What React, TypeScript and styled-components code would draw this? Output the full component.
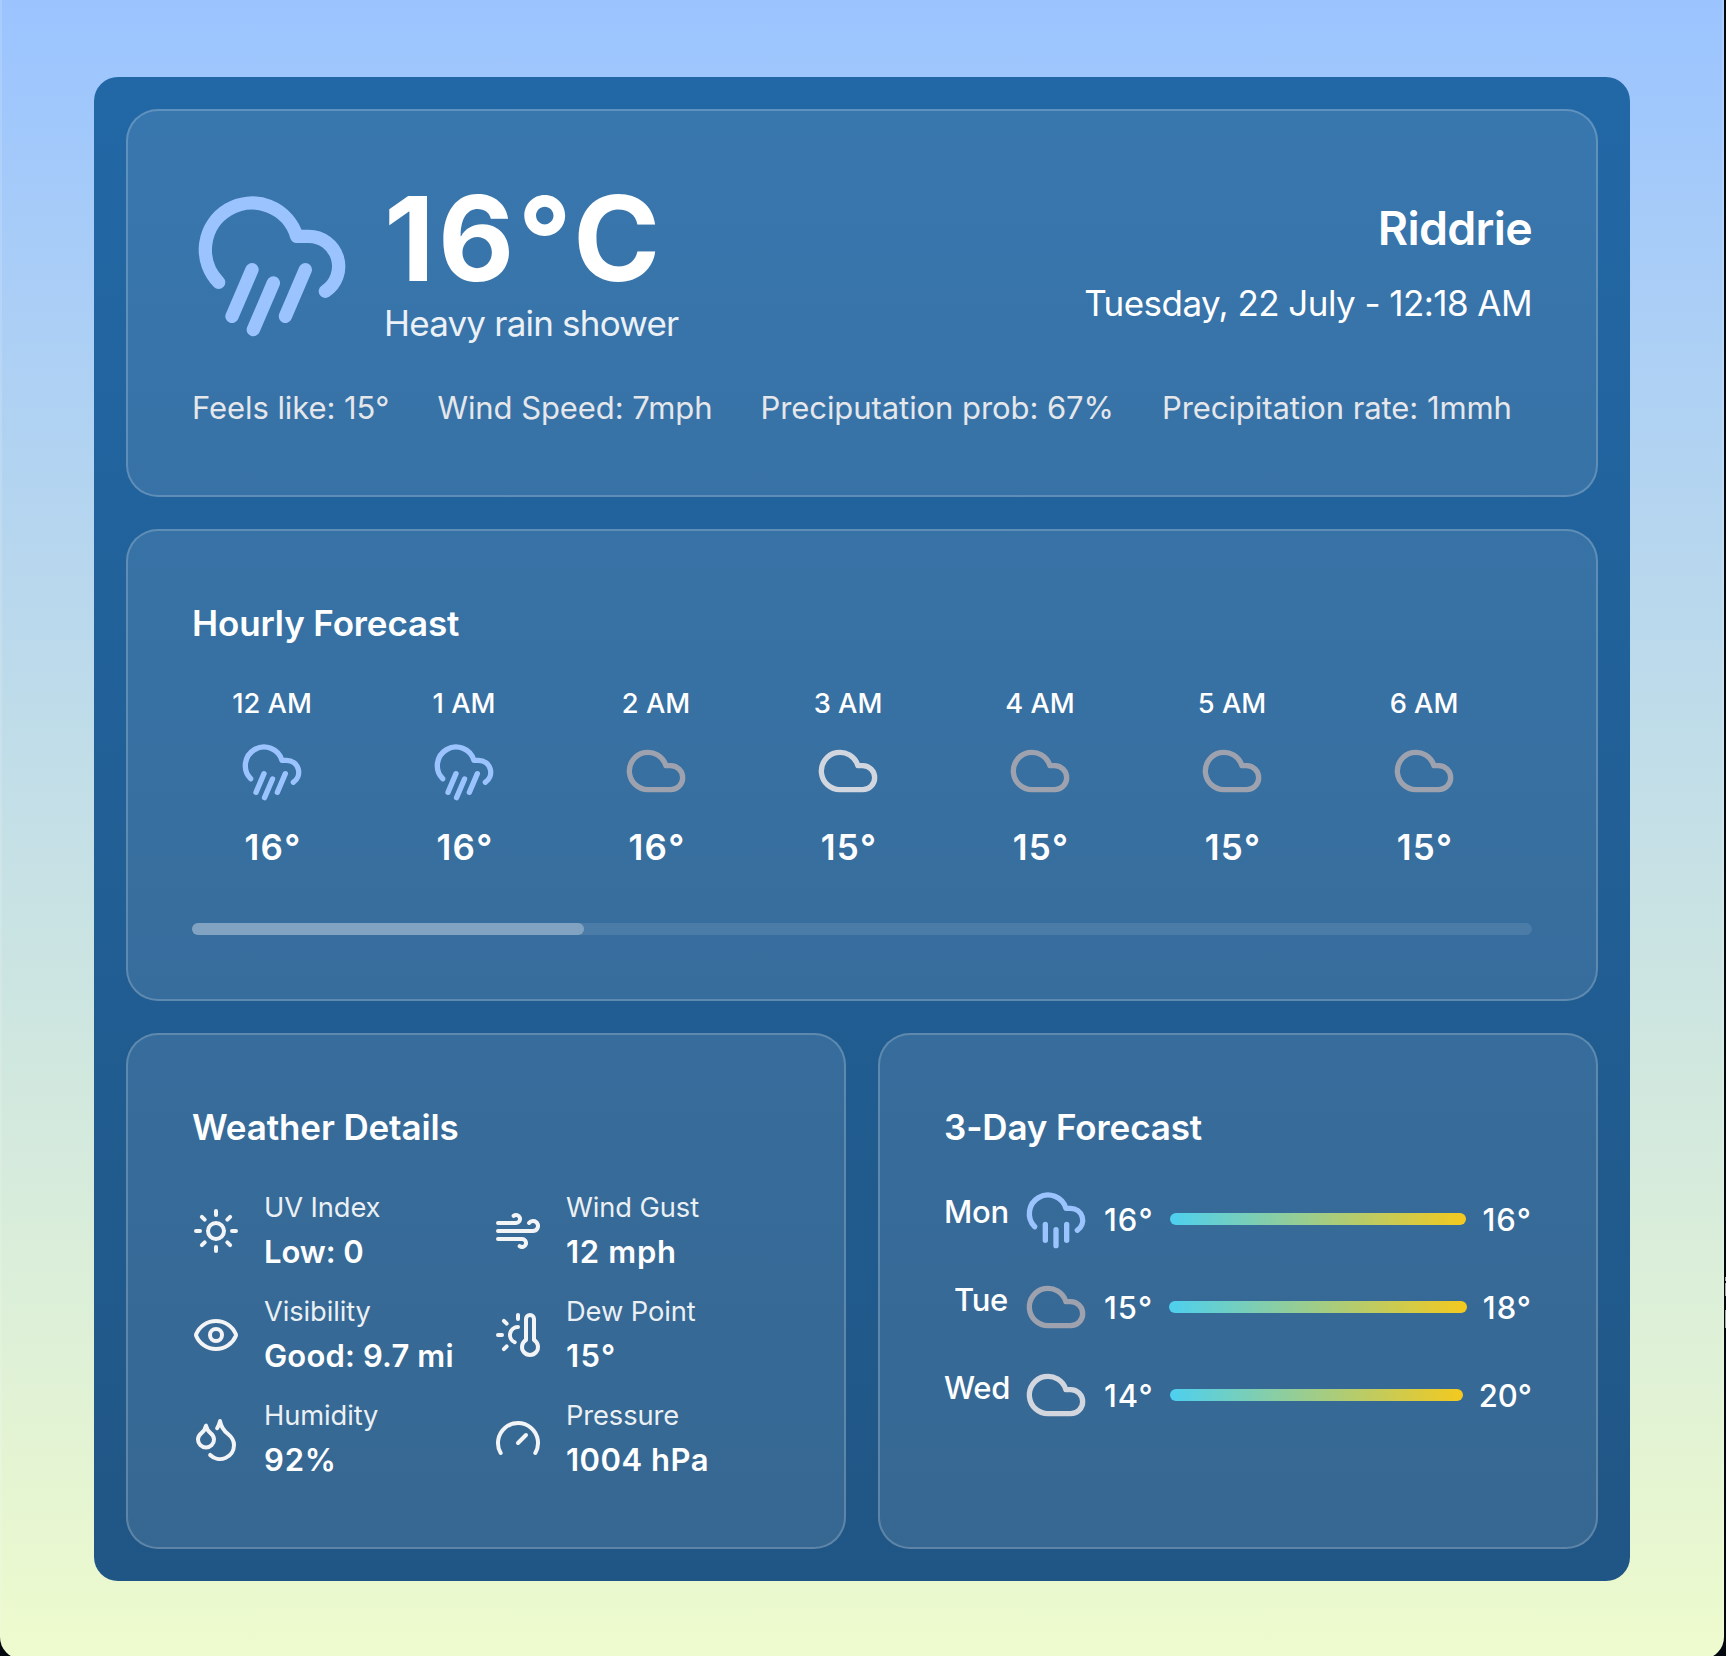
import React from "react";
import styled, { createGlobalStyle } from "styled-components";
import {
  Cloud,
  CloudRain,
  CloudRainWind,
  Droplets,
  Eye,
  Gauge,
  Sun,
  ThermometerSun,
  Wind,
} from "lucide-react";

const GlobalStyle = createGlobalStyle`
  *, *::before, *::after { box-sizing: border-box; }
  body {
    margin: 0;
    height: 1656px;
    overflow: hidden;
    background:
      linear-gradient(
        to bottom,
        transparent 1277px,
        #a5a5a5 1277px, #a5a5a5 1281px,
        transparent 1281px, transparent 1283px,
        #a5a5a5 1283px, #a5a5a5 1296px,
        transparent 1296px, transparent 1310px,
        #a5a5a5 1310px, #a5a5a5 1328px,
        transparent 1328px
      ) right top / 1px 1656px no-repeat,
      #04080f;
    font-family: Inter, "Liberation Sans", sans-serif;
    color: #fff;
    -webkit-font-smoothing: antialiased;
  }
`;

const palette = {
  rain: "#9bc4ff",
  overcast: "#9da2ae",
  cloudy: "#d2d6de",
};

const Page = styled.main`
  width: 1724px;
  height: 1659px;
  padding: 77px 94px 78px;
  border-radius: 0 0 22px 22px;
  background: linear-gradient(to bottom, #9bc4ff 0%, #eefbcd 100%);
  box-shadow: inset 2px 0 0 rgba(255, 255, 255, 0.14), inset -2px 0 0 rgba(255, 255, 255, 0.14);
`;

const Panel = styled.div`
  width: 1536px;
  padding: 32px;
  display: grid;
  grid-template-columns: 1fr 1fr;
  gap: 32px;
  border-radius: 24px;
  background: linear-gradient(to bottom, #2268a6, #205685);
`;

const Card = styled.section<{ $wide?: boolean }>`
  min-width: 0;
  grid-column: ${(p) => (p.$wide ? "1 / -1" : "auto")};
  padding: 64px;
  border: 2px solid rgba(255, 255, 255, 0.2);
  border-radius: 32px;
  background: rgba(255, 255, 255, 0.1);
`;

const Row = styled.div`
  display: flex;
  align-items: center;
  justify-content: space-between;
`;

const Now = styled.div`
  display: flex;
  align-items: center;
  gap: 32px;
`;

const Temperature = styled.div`
  height: 120px;
  padding-top: 3px;
  font-size: 117.5px;
  line-height: 120px;
  font-weight: 700;
  letter-spacing: 3.4px;
`;

const Condition = styled.div`
  font-size: 35px;
  line-height: 56px;
  letter-spacing: -0.8px;
  opacity: 0.9;
`;

const Place = styled.div`
  display: flex;
  flex-direction: column;
  gap: 16px;
  text-align: right;
`;

const City = styled.h1`
  margin: 0;
  height: 64px;
  padding-top: 1px;
  font-size: 46.5px;
  line-height: 64px;
  font-weight: 600;
  letter-spacing: -0.7px;
`;

const DateLine = styled.div`
  font-size: 35px;
  line-height: 56px;
  letter-spacing: -0.55px;
`;

const Stats = styled.div`
  display: flex;
  gap: 48px;
  height: 48px;
  margin-top: 32px;
  padding-top: 1px;
  font-size: 31px;
  line-height: 48px;
  letter-spacing: -0.07px;
  color: #e5e7eb;
  white-space: nowrap;
`;

const Title = styled.h2`
  margin: 0 0 32px;
  font-size: 35px;
  line-height: 56px;
  font-weight: 600;
  letter-spacing: -0.12px;
`;

const Hours = styled.div`
  display: flex;
  gap: 32px;
  padding-bottom: 48px;
  overflow: hidden;
`;

const Hour = styled.div`
  flex: 0 0 160px;
  display: flex;
  flex-direction: column;
  align-items: center;
  gap: 16px;
`;

const HourLabel = styled.div`
  height: 40px;
  padding-top: 1px;
  font-size: 27.3px;
  line-height: 40px;
  font-weight: 500;
`;

const HourTemp = styled.div`
  padding-left: 2px;
  font-size: 35px;
  line-height: 56px;
  font-weight: 600;
  letter-spacing: 1.2px;
`;

const ScrollTrack = styled.div`
  height: 12px;
  border-radius: 6px;
  background: rgba(255, 255, 255, 0.1);
`;

const ScrollThumb = styled.div`
  width: 392px;
  height: 12px;
  border-radius: 6px;
  background: rgba(255, 255, 255, 0.3);
`;

const Details = styled.div`
  display: grid;
  grid-template-columns: 1fr 1fr;
  gap: 16px;
`;

const Detail = styled.div`
  display: flex;
  align-items: center;
  gap: 24px;
  white-space: nowrap;

  svg { flex: none; color: #f3f4f6; }
`;

const DetailLabel = styled.div`
  height: 40px;
  padding-top: 1px;
  font-size: 27.3px;
  line-height: 40px;
  letter-spacing: -0.1px;
  opacity: 0.9;
`;

const DetailValue = styled.div<{ $tracking: number }>`
  height: 48px;
  padding-top: 1px;
  font-size: 31px;
  line-height: 48px;
  font-weight: 600;
  letter-spacing: ${(p) => p.$tracking}px;
`;

const Days = styled.div`
  display: flex;
  flex-direction: column;
  gap: 24px;
`;

const Day = styled.div`
  display: flex;
  align-items: center;
  gap: 16px;
  height: 64px;
  font-size: 31px;
  line-height: 48px;
  font-weight: 500;

  svg { flex: none; }
`;

const DayName = styled.div`
  width: 64px;
  min-width: 0;
  flex: none;
  align-self: flex-start;
  padding-top: 1px;
  text-align: right;
  letter-spacing: -0.3px;
`;

const DayTemp = styled.div<{ $tracking?: number }>`
  padding-top: 2px;
  letter-spacing: ${(p) => p.$tracking ?? 1}px;
`;

const Range = styled.div`
  flex: 1;
  height: 12px;
  border-radius: 6px;
  background: linear-gradient(to right, #4dd0ef, #f4c91e);
`;

const RAIN = <CloudRainWind size={64} color={palette.rain} />;
const OVERCAST = <Cloud size={64} color={palette.overcast} />;
const CLOUDY = <Cloud size={64} color={palette.cloudy} />;

const hours = [
  { label: "12 AM", icon: RAIN, temp: 16 },
  { label: "1 AM", icon: RAIN, temp: 16 },
  { label: "2 AM", icon: OVERCAST, temp: 16 },
  { label: "3 AM", icon: CLOUDY, temp: 15 },
  { label: "4 AM", icon: OVERCAST, temp: 15 },
  { label: "5 AM", icon: OVERCAST, temp: 15 },
  { label: "6 AM", icon: OVERCAST, temp: 15 },
];

const details = [
  { label: "UV Index", value: "Low: 0", Icon: Sun, tracking: -0.1 },
  { label: "Wind Gust", value: "12 mph", Icon: Wind, tracking: 0.7 },
  { label: "Visibility", value: "Good: 9.7 mi", Icon: Eye, tracking: 0.15 },
  { label: "Dew Point", value: "15°", Icon: ThermometerSun, tracking: 1.3 },
  { label: "Humidity", value: "92%", Icon: Droplets, tracking: 0.8 },
  { label: "Pressure", value: "1004 hPa", Icon: Gauge, tracking: 0.5 },
];

const days = [
  { name: "Mon", icon: <CloudRain size={64} color={palette.rain} />, low: 16, high: 16 },
  { name: "Tue", icon: OVERCAST, low: 15, high: 18 },
  { name: "Wed", icon: CLOUDY, low: 14, high: 20 },
];

export default function App() {
  return (
    <>
      <GlobalStyle />
      <Page>
        <Panel>
          <Card $wide>
            <Row>
              <Now>
                <CloudRainWind size={160} color={palette.rain} />
                <div>
                  <Temperature>16°C</Temperature>
                  <Condition>Heavy rain shower</Condition>
                </div>
              </Now>
              <Place>
                <City>Riddrie</City>
                <DateLine>Tuesday, 22 July - 12:18 AM</DateLine>
              </Place>
            </Row>
            <Stats>
              <span>Feels like: 15°</span>
              <span>Wind Speed: 7mph</span>
              <span>Preciputation prob: 67%</span>
              <span>Precipitation rate: 1mmh</span>
            </Stats>
          </Card>

          <Card $wide>
            <Title>Hourly Forecast</Title>
            <Hours>
              {hours.map((h) => (
                <Hour key={h.label}>
                  <HourLabel>{h.label}</HourLabel>
                  {h.icon}
                  <HourTemp>{h.temp}°</HourTemp>
                </Hour>
              ))}
            </Hours>
            <ScrollTrack>
              <ScrollThumb />
            </ScrollTrack>
          </Card>

          <Card>
            <Title>Weather Details</Title>
            <Details>
              {details.map(({ label, value, Icon, tracking }) => (
                <Detail key={label}>
                  <Icon size={48} />
                  <div>
                    <DetailLabel>{label}</DetailLabel>
                    <DetailValue $tracking={tracking}>{value}</DetailValue>
                  </div>
                </Detail>
              ))}
            </Details>
          </Card>

          <Card>
            <Title>3-Day Forecast</Title>
            <Days>
              {days.map((d) => (
                <Day key={d.name}>
                  <DayName>{d.name}</DayName>
                  {d.icon}
                  <DayTemp>{d.low}°</DayTemp>
                  <Range />
                  <DayTemp $tracking={d.high === 20 ? 0 : 1}>{d.high}°</DayTemp>
                </Day>
              ))}
            </Days>
          </Card>
        </Panel>
      </Page>
    </>
  );
}
